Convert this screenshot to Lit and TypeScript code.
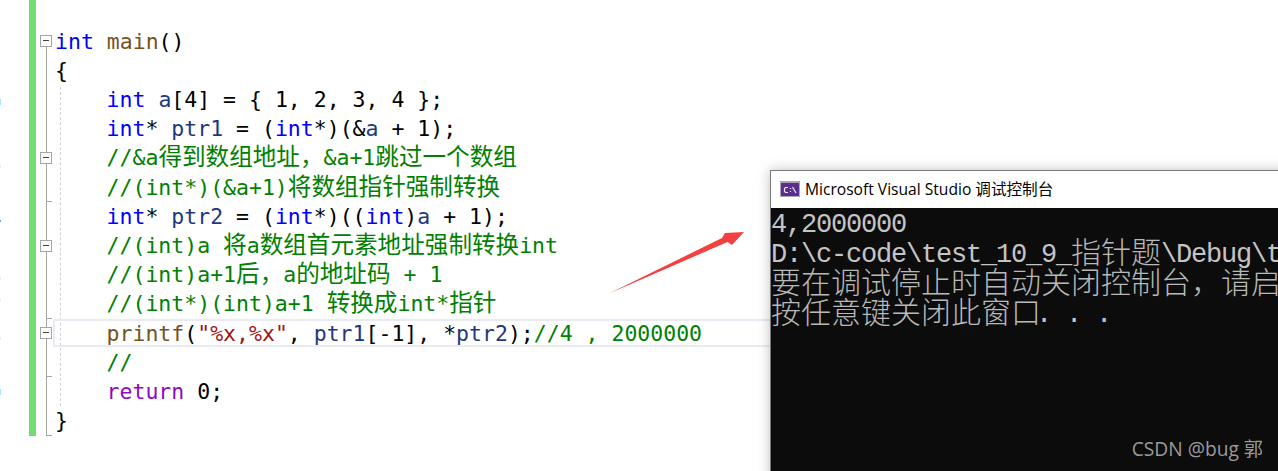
import { LitElement, html, css } from "lit";
import { customElement } from "lit/decorators.js";

const k = (s: string) => html`<span class="k">${s}</span>`;
const v = (s: string) => html`<span class="v">${s}</span>`;
const z = (s: string) => html`<span class="z">${s}</span>`;
const ptr = (s: string) => html`${k("int")}* ${v(s)} = (${k("int")}*)`;

const rows = [
  { g: "fold first", c: "l0", code: html`${k("int")} <span class="f">main</span>()` },
  { g: "", c: "l0", code: html`{` },
  { g: "", c: "", code: html`${k("int")} ${v("a")}[4] = { 1, 2, 3, 4 };` },
  { g: "", c: "", code: html`${ptr("ptr1")}(&${v("a")} + 1);` },
  { g: "fold", c: "", code: html`<span class="c">//&a${z("得到数组地址，")}&a+1${z("跳过一个数组")}</span>` },
  { g: "tick", c: "", code: html`<span class="c">//(int*)(&a+1)${z("将数组指针强制转换")}</span>` },
  { g: "", c: "", code: html`${ptr("ptr2")}((${k("int")})${v("a")} + 1);` },
  { g: "fold", c: "", code: html`<span class="c">//(int)a ${z("将")}a${z("数组首元素地址强制转换")}int</span>` },
  { g: "", c: "", code: html`<span class="c">//(int)a+1${z("后，")}a${z("的地址码")} + 1</span>` },
  { g: "tick", c: "", code: html`<span class="c">//(int*)(int)a+1 ${z("转换成")}int*${z("指针")}</span>` },
  {
    g: "fold",
    c: "cur",
    code: html`<span class="f">printf</span>(<span class="s">"%x,%x"</span>, ${v("ptr1")}[-1], *${v("ptr2")});<span class="c">//4 , 2000000</span>`,
  },
  { g: "tick", c: "", code: html`<span class="c">//</span>` },
  { g: "", c: "", code: html`<span class="r">return</span> 0;` },
  { g: "end", c: "l0", code: html`}` },
];

const marks = [
  { y: 99, h: 6, c: "#a8e4fb" },
  { y: 165, h: 3, c: "#dff5fd" },
  { y: 220, h: 2, c: "#5aa9f0" },
  { y: 277, h: 3, c: "#dff5fd" },
  { y: 298, h: 3, c: "#dff5fd" },
  { y: 337, h: 3, c: "#dff5fd" },
  { y: 389, h: 6, c: "#a8e4fb" },
];

@customElement("app-root")
export class AppRoot extends LitElement {
  static styles = css`
    :host {
      display: block;
      width: 1278px;
      height: 471px;
      position: relative;
      overflow: hidden;
      background: #fff;
    }
    .editor {
      display: flex;
      height: 100%;
      padding-left: 29px;
      box-sizing: border-box;
    }
    .bar {
      width: 7px;
      height: 436px;
      background: #72dd72;
      flex: none;
    }
    .rows {
      flex: 1;
      padding-top: 26.5px;
      position: relative;
    }
    .guide {
      position: absolute;
      left: 24px;
      top: 87px;
      height: 319px;
      border-left: 1px dashed #d2d2d2;
    }
    .row {
      display: flex;
      height: 29.23px;
    }
    .gutter {
      width: 19px;
      flex: none;
      position: relative;
    }
    .gutter::before {
      content: "";
      position: absolute;
      left: 10px;
      top: 0;
      bottom: 0;
      border-left: 1px solid #a5a5a5;
    }
    .gutter.first::before {
      top: 50%;
    }
    .gutter.tick::after,
    .gutter.end::after {
      content: "";
      position: absolute;
      left: 10px;
      bottom: 0;
      width: 6px;
      border-bottom: 1px solid #a5a5a5;
    }
    .box {
      position: absolute;
      left: 4px;
      top: 50%;
      width: 12px;
      height: 12px;
      margin-top: -6px;
      border: 1px solid #a5a5a5;
      background: #fff;
      box-sizing: border-box;
      z-index: 1;
    }
    .box::after {
      content: "";
      position: absolute;
      left: 2px;
      right: 2px;
      top: 4px;
      border-top: 1px solid #444;
    }
    .code {
      flex: 1;
      font: 21.5px/29.23px "DejaVu Sans Mono", "Noto Sans CJK SC", monospace;
      color: #000;
      white-space: pre;
      padding-left: 51.6px;
      position: relative;
    }
    .code.l0 {
      padding-left: 0;
    }
    .code.cur::before {
      content: "";
      position: absolute;
      left: -2px;
      right: 0;
      top: 0;
      height: 28px;
      box-sizing: border-box;
      border: 2px solid #eaeaf2;
      border-right: 0;
    }
    .k { color: #0000ff; }
    .v { color: #1f377f; }
    .f { color: #74531f; }
    .s { color: #a31515; }
    .r { color: #8f08c4; }
    .c { color: #008000; }
    .z {
      font-family: "Noto Sans CJK SC", sans-serif;
      font-size: 23.6px;
      line-height: 0;
    }
    .marks {
      position: absolute;
      left: 0;
      top: 0;
    }
    .mark {
      position: absolute;
      left: 0;
      width: 1px;
    }
    .arrow {
      position: absolute;
      left: 600px;
      top: 225px;
    }
    .window {
      position: absolute;
      left: 770px;
      top: 170px;
      width: 520px;
      height: 320px;
      box-sizing: border-box;
      border: 1px solid #7a7a7a;
      background: #0c0c0c;
      box-shadow: 0 0 12px rgba(0, 0, 0, 0.25);
      display: flex;
      flex-direction: column;
    }
    .title {
      height: 37px;
      flex: none;
      background: #fff;
      display: flex;
      align-items: center;
      gap: 5px;
      padding-left: 9px;
      padding-bottom: 2px;
      box-sizing: border-box;
      font: 15.6px "Open Sans", "Noto Sans CJK SC", sans-serif;
      color: #000;
    }
    .term {
      padding: 2px 0 0 0;
      font: 27px/30px "Liberation Mono", "Noto Sans CJK SC", monospace;
      letter-spacing: -1.2px;
      color: #c4c4c4;
      white-space: pre;
      overflow: hidden;
    }
    .term .t {
      font-family: "Noto Sans CJK SC", sans-serif;
      font-size: 30px;
      font-weight: 200;
      color: #b8b8b8;
      letter-spacing: 0;
      line-height: 0;
      position: relative;
      top: 1px;
    }
    .term .dots {
      margin-left: -5px;
    }
    .wm {
      position: absolute;
      right: 15px;
      bottom: 9px;
      font: 19.2px "Open Sans", "Noto Sans CJK SC", sans-serif;
      color: #9a9a9a;
    }
  `;

  render() {
    const t = (s: string) => html`<span class="t">${s}</span>`;
    return html`
      <div class="editor">
        <div class="bar"></div>
        <div class="rows">
          <div class="guide"></div>
          ${rows.map(
            (r) => html`<div class="row">
              <div class="gutter ${r.g}">${r.g.includes("fold") ? html`<div class="box"></div>` : ""}</div>
              <div class="code ${r.c}">${r.code}</div>
            </div>`
          )}
        </div>
      </div>
      <div class="marks">
        ${marks.map((m) => html`<div class="mark" style="top:${m.y}px;height:${m.h}px;background:${m.c}"></div>`)}
      </div>
      <svg class="arrow" width="150" height="75" viewBox="600 225 150 75">
        <polygon points="609,293.5 722,238 725,233 744,232 732,245 727.5,242" fill="#f34040"></polygon>
      </svg>
      <div class="window">
        <div class="title">
          <svg width="20" height="16" viewBox="0 0 20 16">
            <rect width="20" height="16" fill="#a8a8ae"></rect>
            <rect x="1" y="2" width="18" height="13" fill="#5c2d91"></rect>
            <path d="M8 6.5H5.5L4.5 7.5V10.5L5.5 11.5H8M10.5 7V8M10.5 10V11M12.5 6L16 12" stroke="#eee8f5" fill="none" stroke-width="1.2"></path>
          </svg>
          <span>Microsoft Visual Studio 调试控制台</span>
        </div>
        <div class="term">4,2000000
D:\\c-code\\test_10_9_${t("指针题")}\\Debug\\test
${t("要在调试停止时自动关闭控制台，请启用")}
${t("按任意键关闭此窗口")}<span class="dots">. . .</span></div>
      </div>
      <div class="wm">CSDN @bug 郭</div>
    `;
  }
}
